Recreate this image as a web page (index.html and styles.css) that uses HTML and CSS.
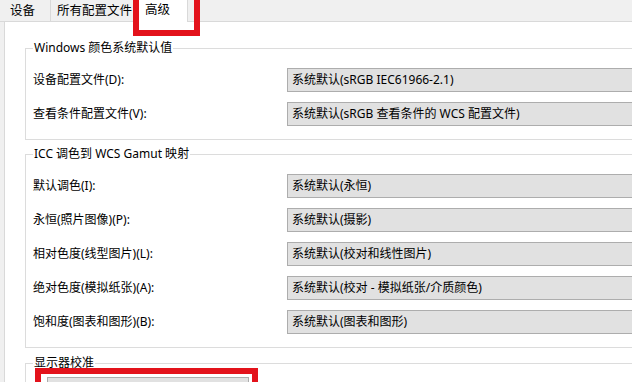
FILE: index.html
```html
<!DOCTYPE html>
<html lang="zh-CN">
<head>
    <meta charset="UTF-8">
    <title>颜色管理 - 高级</title>
    <link rel="stylesheet" href="styles.css">
</head>
<body>

<div class="tabs">
    <div class="tab">设备</div>
    <div class="tab">所有配置文件</div>
    <div class="tab active">高级</div>
</div>

<div class="page">
    <fieldset class="group">
        <legend>Windows 颜色系统默认值</legend>
        <div class="row">
            <span class="label">设备配置文件(D):</span>
            <div class="combo">系统默认(sRGB IEC61966-2.1)</div>
        </div>
        <div class="row">
            <span class="label">查看条件配置文件(V):</span>
            <div class="combo">系统默认(sRGB 查看条件的 WCS 配置文件)</div>
        </div>
    </fieldset>

    <fieldset class="group">
        <legend>ICC 调色到 WCS Gamut 映射</legend>
        <div class="row">
            <span class="label">默认调色(I):</span>
            <div class="combo">系统默认(永恒)</div>
        </div>
        <div class="row">
            <span class="label">永恒(照片图像)(P):</span>
            <div class="combo">系统默认(摄影)</div>
        </div>
        <div class="row">
            <span class="label">相对色度(线型图片)(L):</span>
            <div class="combo">系统默认(校对和线性图片)</div>
        </div>
        <div class="row">
            <span class="label">绝对色度(模拟纸张)(A):</span>
            <div class="combo">系统默认(校对 - 模拟纸张/介质颜色)</div>
        </div>
        <div class="row">
            <span class="label">饱和度(图表和图形)(B):</span>
            <div class="combo">系统默认(图表和图形)</div>
        </div>
    </fieldset>

    <fieldset class="group group-last">
        <legend>显示器校准</legend>
        <div class="btn"></div>
    </fieldset>
</div>

<!-- red annotation boxes -->
<div class="mark mark-tab"></div>
<div class="mark mark-btn"></div>

</body>
</html>
```

FILE: styles.css
```css
html, body {
    margin: 0;
    height: 100%;
    overflow: hidden;
}

body {
    position: relative;
    background-color: #f0f0f0;
    font-family: "Noto Sans", "Noto Sans CJK SC", sans-serif;
    font-size: 12px;
    line-height: 16px;
    color: #000;
}

/* Tab strip */
.tabs {
    display: flex;
    height: 21px;
    padding-left: 2px;
    border-bottom: 1px solid #d9d9d9;
}

.tab {
    padding: 3px 6px 0 6px;
    border-right: 1px solid #d9d9d9;
    font-size: 12.5px;
}

.tab:first-child {
    padding-left: 8px;
    padding-right: 15px;
}

.tab.active {
    height: 20px;
    margin-bottom: -1px;
    padding: 2px 17px 0 6px;
    background-color: #fff;
}

/* Page */
.page {
    height: 100%;
    margin-left: 4px;
    padding: 18px 0 0 20px;
    background-color: #fff;
    border-left: 1px solid #d9d9d9;
}

.group {
    width: 700px;
    min-width: 0;
    margin: 0 0 6px;
    padding: 12px 0 13px 7px;
    border: 1px solid #dcdcdc;
}

.group + .group {
    margin-bottom: 7px;
}

.group legend {
    padding: 0 1px;
    line-height: 16px;
}

.group-last {
    padding-top: 6px;
}

.row {
    display: flex;
    align-items: center;
    height: 24px;
    margin-bottom: 10px;
}

.row:last-child {
    margin-bottom: 0;
}

.label {
    flex: none;
    width: 254px;
}

.combo {
    flex: none;
    box-sizing: border-box;
    width: 430px;
    height: 24px;
    padding-left: 4px;
    line-height: 22px;
    background-color: #e1e1e1;
    border: 1px solid #adadad;
    white-space: nowrap;
}

.btn {
    width: 200px;
    height: 22px;
    margin-left: 14px;
    background-color: #e1e1e1;
    border: 1px solid #adadad;
}

/* Annotation marks */
.mark {
    position: absolute;
    border: 6px solid #e3121b;
}

.mark-tab {
    left: 133px;
    top: -6px;
    width: 55px;
    height: 30px;
}

.mark-btn {
    left: 35px;
    top: 368px;
    width: 211px;
    height: 40px;
}
```
